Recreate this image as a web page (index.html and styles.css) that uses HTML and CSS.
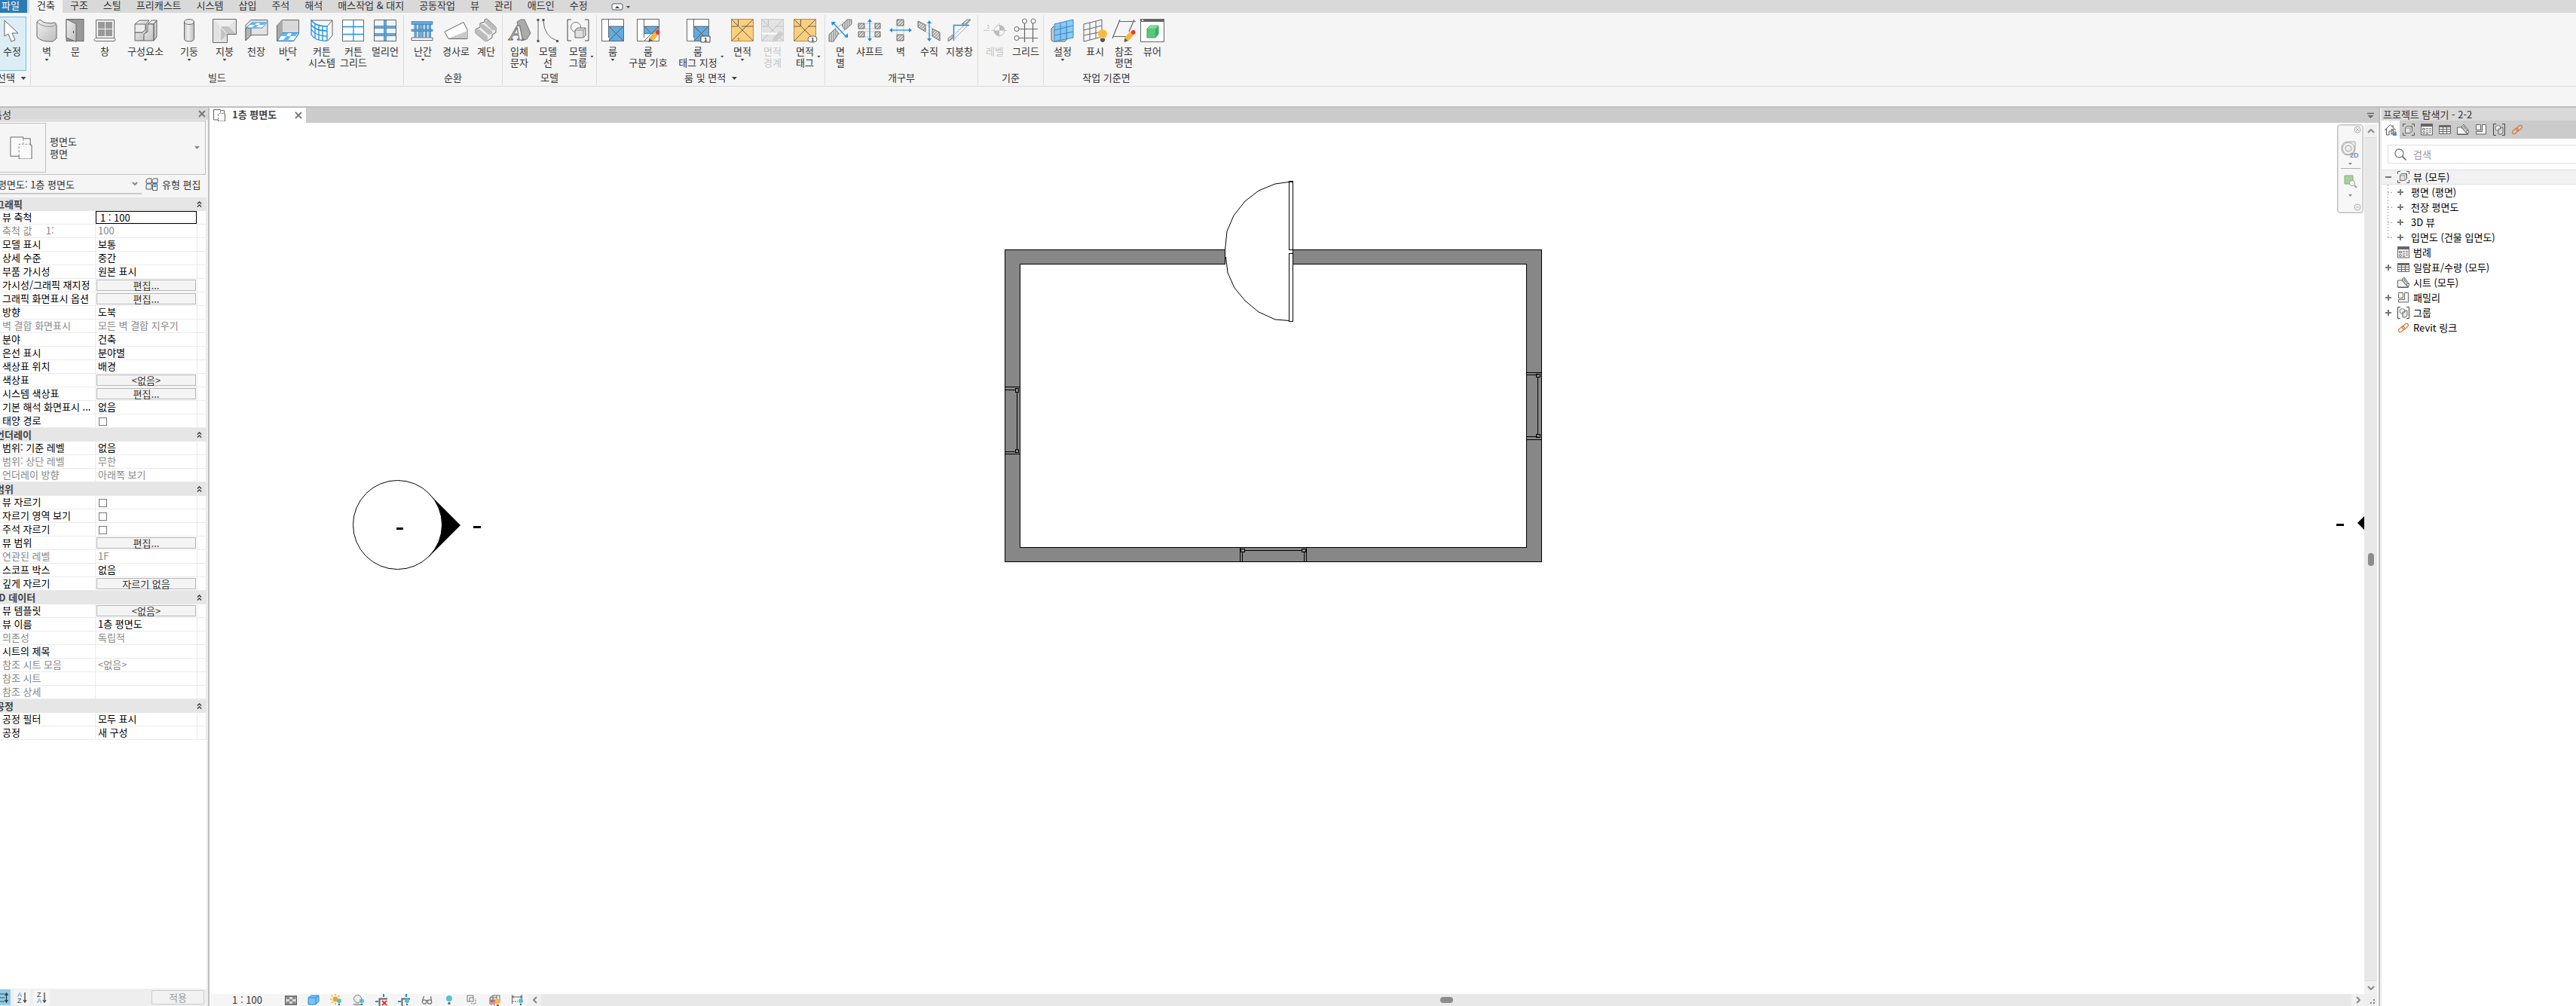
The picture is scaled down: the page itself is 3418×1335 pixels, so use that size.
FILE: index.html
```html
<!DOCTYPE html>
<html lang="ko">
<head>
<meta charset="utf-8">
<title>1층 평면도</title>
<link rel="stylesheet" href="styles.css">
</head>
<body>
<svg class="sprite" aria-hidden="true">
  <defs>
    <linearGradient id="metal" x1="0" y1="0" x2="1" y2="1"><stop offset="0" stop-color="#f2f2f2"/><stop offset="1" stop-color="#bdbdbd"/></linearGradient>
    <linearGradient id="tube" x1="0" y1="0" x2="1" y2="0"><stop offset="0" stop-color="#c4c4c4"/><stop offset=".4" stop-color="#efefef"/><stop offset="1" stop-color="#bbb"/></linearGradient>
    <pattern id="hatch" width="4" height="4" patternUnits="userSpaceOnUse"><rect width="4" height="4" fill="#d6d6d6"/><path d="M-1 5L5-1M-1 1L1-1M3 5L5 3" stroke="#777" stroke-width=".9"/></pattern>
    <pattern id="vhatch" width="3" height="3" patternUnits="userSpaceOnUse"><rect width="3" height="3" fill="#d6d6d6"/><path d="M1 0V3" stroke="#777" stroke-width=".9"/></pattern>
  </defs>
  <symbol id="plan" viewBox="0 0 16 16"><path d="M.5 .5h9v1h5v4.500h1v10H6.500V14h-6z" fill="#fafafa" stroke="#666" vector-effect="non-scaling-stroke"/><path d="M9.500 1.500v4H15M6.500 14V5.500h3" fill="none" stroke="#888" stroke-dasharray="3 2" vector-effect="non-scaling-stroke"/></symbol>
  <symbol id="views" viewBox="0 0 16 16"><path d="M4 .5H.5V4M12 .5h3.500V4M.5 12v3.500H4M15.500 12v3.500H12" fill="none" stroke="#555"/><path d="M3.500 6l2-2.500h7v6.500l-2.500 2.500H3.500z" fill="#e4e4e4" stroke="#666"/><path d="M3.500 6H10v6.500M10 6l2.500-2.500" fill="none" stroke="#999"/></symbol>
  <symbol id="legend" viewBox="0 0 16 16"><path d="M.5 1h15v14H.5z" fill="#f4f4f4" stroke="#666"/><path d="M0 0h16v4H0z" fill="#666"/><path d="M2.500 6.500h3v2h-3z" fill="none" stroke="#777"/><circle cx="4" cy="12" r="1.500" fill="none" stroke="#777"/><path d="M7 6.500h7M7 9h7M7 11.500h7M7 13.500h4" stroke="#777" stroke-dasharray="3 1"/></symbol>
  <symbol id="sched" viewBox="0 0 16 16"><path d="M.5 3h15v10.500H.5z" fill="#f4f4f4" stroke="#666"/><path d="M0 2h16v3H0z" fill="#666"/><path d="M0 7.500h16M0 10.500h16M5.500 4v10M10.500 4v10" stroke="#666"/></symbol>
  <symbol id="sheet" viewBox="0 0 16 16"><path d="M.5 14V5h5l2 2 7.500 7z" fill="#f4f4f4" stroke="#666"/><path d="M6 4l3-3 6.500 8.500-3 3z" fill="#e4e4e4" stroke="#666"/><path d="M7.500 2.500l3.500 5M9 3l4 6" stroke="#888" fill="none"/><circle cx="14" cy="11" r="1.800" fill="#eee" stroke="#666"/><path d="M.5 14.500h14" stroke="#555"/></symbol>
  <symbol id="family" viewBox="0 0 16 16"><path d="M1.500 1.500h6v7h-6zM9.500 1.500h5v12.500h-13v-3.500h8z" fill="#f4f4f4" stroke="#666"/></symbol>
  <symbol id="group" viewBox="0 0 16 16"><path d="M4 .5H.5v15H4M12 .5h3.500v15H12" fill="none" stroke="#444"/><circle cx="6.500" cy="6" r="3.500" fill="#eee" stroke="#777"/><path d="M7 7h3V5h3v7l-2 2H7z" fill="#ddd" fill-opacity=".7" stroke="#666"/></symbol>
  <symbol id="link" viewBox="0 0 16 16"><g fill="none" stroke="#e07b39" stroke-width="1.300"><rect x="-4.500" y="-2.300" width="9" height="4.600" rx="2.300" transform="translate(5.500 10) rotate(-42)"/><rect x="-4.500" y="-2.300" width="9" height="4.600" rx="2.300" transform="translate(10.500 6) rotate(-42)"/></g></symbol>
  <symbol id="close" viewBox="0 0 10 10"><path d="M1 1l8 8M9 1L1 9" stroke="#777" stroke-width="1.800"/></symbol>
  <symbol id="collapse" viewBox="0 0 8 10"><path d="M1 4.500l3-3 3 3M1 9l3-3 3 3" fill="none" stroke="#333" stroke-width="1.500"/></symbol>
  <symbol id="bulb" viewBox="0 0 8 13"><circle cx="4" cy="4" r="4" fill="#56c2cc"/><path d="M2.500 9h3v3h-3z" fill="#666"/></symbol>
  <symbol id="pencil" viewBox="0 0 16 17"><path d="M0 17l1-6 5 4z" fill="#5c5c5c"/><path d="M1 11l8-9 5 4-8 9z" fill="#fcb73e" stroke="#d99a2b" stroke-width=".5"/><circle cx="13" cy="3" r="3" fill="#f2323c"/></symbol>
</svg>

<nav class="tabs" aria-label="리본 탭">
  <button class="tab file">파일</button><button class="tab active">건축</button><button class="tab">구조</button><button class="tab">스틸</button><button class="tab">프리캐스트</button><button class="tab">시스템</button><button class="tab">삽입</button><button class="tab">주석</button><button class="tab">해석</button><button class="tab">매스작업 &amp; 대지</button><button class="tab">공동작업</button><button class="tab">뷰</button><button class="tab">관리</button><button class="tab">애드인</button><button class="tab">수정</button>
  <button class="minimize" aria-label="리본 최소화"><svg width="26" height="12" viewBox="0 0 26 12"><rect x="1" y="2" width="14" height="8" rx="2" fill="#fff" stroke="#4a5560"/><path d="M5 8l3-3 3 3z" fill="#333"/><path d="M20 5h5l-2.500 3z" fill="#444"/></svg></button>
</nav>

<div class="ribbon">
  <section class="panel select-panel">
    <div class="tools"><button class="tool modify"><svg viewBox="0 0 32 32"><path d="M6 3v21l5-3 4 10 5-2-4-9h8z" fill="#fff" stroke="#666"/></svg><span class="label">수정</span></button></div>
    <h2>선택 <i class="tri"></i></h2>
  </section>
  <section class="panel">
    <div class="tools">
      <button class="tool w38"><svg viewBox="0 0 32 32"><path d="M3 5l4-3Q14 9 27 6l2 3v18l-5 4Q9 32 3 25z" fill="url(#metal)" stroke="#666"/><path d="M3 5Q11 13 24 11l5-3M24 11" fill="none" stroke="#888"/></svg><span class="label">벽</span><i class="tri"></i></button>
      <button class="tool w38"><svg viewBox="0 0 32 32"><path d="M4 1.500h23v29H4z" fill="#999" stroke="#666"/><path d="M4 1.500l13 6v24L4 26z" fill="url(#metal)" stroke="#666"/><path d="M13.500 17v3" stroke="#444"/></svg><span class="label">문</span></button>
      <button class="tool w40"><svg viewBox="0 0 32 32"><path d="M4.500 2.500h24v24h-24z" fill="#f5f5f5" stroke="#666"/><path d="M7 5h9v9H7zM17 5h9v9h-9zM7 15h9v9H7zM17 15h9v9h-9z" fill="#999"/><path d="M4 26.500h25l1 2q0 2-2 2H4q-2 0-2-2z" fill="#fff" stroke="#666"/></svg><span class="label">창</span></button>
      <button class="tool w68"><svg viewBox="0 0 32 32"><path d="M2 8l6-5h13l-4 5v13l-3 3v6H2V19h10l4-5" fill="url(#metal)" stroke="#666"/><path d="M2 8v11h10l4-4V8zM19 8l5-5h7l-4 5z" fill="#ededed" stroke="#666"/><path d="M19 8h8v22H14v-9l5-3zM27 8l4-5v22l-4 5z" fill="url(#metal)" stroke="#666"/></svg><span class="label">구성요소</span><i class="tri"></i></button>
      <button class="tool w48"><svg viewBox="0 0 32 32"><path d="M9.500 5v22q0 4 6.500 4t6.500-4V5" fill="url(#tube)" stroke="#666"/><ellipse cx="16" cy="5" rx="6.500" ry="3.500" fill="#e8e8e8" stroke="#666"/></svg><span class="label">기둥</span><i class="tri"></i></button>
      <button class="tool w46"><svg viewBox="0 0 32 32"><path d="M.5 1.500h31v20h-12v11H.500z" fill="#e2e2e2" stroke="#666"/><path d="M1 2l9 9v20l9-9v-1l12 0-10-10H10z" fill="#c4c4c4"/><path d="M1 2l9 9h11l10-9z" fill="#efefef"/><path d="M10 11l9 10M10 11v20" stroke="#fff"/></svg><span class="label">지붕</span><i class="tri"></i></button>
      <button class="tool w38"><svg viewBox="0 0 32 32"><path d="M2 9l7-6.500h22v20H9L2 30z" fill="#e2e2e2" stroke="#666"/><path d="M2 13v17l7-7V13z" fill="#b5b5b5" stroke="#666"/><path d="M3 13l7-7h20l-6 7z" fill="#fff" stroke="#1a8fe8"/><path d="M10 6h7l-3 3H7zM22 6h7l-3 3h-7zM14 9h5l-4 4h-5z" fill="#62b5f0"/></svg><span class="label">천장</span></button>
      <button class="tool w46"><svg viewBox="0 0 32 32"><path d="M1.500 10l7-7.500h22v18l-7 10h-22z" fill="#d8d8d8" stroke="#666"/><path d="M2 10l7-7v18l-7 9z" fill="#aaa"/><path d="M2 30l7-10.500h21.500L24 30z" fill="#fff" stroke="#1a8fe8"/><path d="M9 20h7l-2 4H7zM21 20h8l-3 4h-7zM14 24h6l-4 5H10z" fill="#62b5f0"/></svg><span class="label">바닥</span><i class="tri"></i></button>
      <button class="tool w44"><svg viewBox="0 0 32 32"><path d="M2 3h28v20l-6 7M30 3l-7 8" fill="none" stroke="#666"/><path d="M2 3q6 8 21 8v19Q8 31 2 22zM2 9q6 8 21 8M2 15q6 9 21 9M7 7v20M12 10v19M17 11v19" fill="none" stroke="#1a8fe8" stroke-width="1.300"/></svg><span class="label">커튼<br>시스템</span></button>
      <button class="tool w40"><svg viewBox="0 0 32 32"><path d="M1.500 2.500h28v28h-28z" fill="#fff" stroke="#666"/><path d="M16 2v29M1 11.500h29M1 21.500h29" stroke="#1a8fe8" stroke-width="1.300"/></svg><span class="label">커튼<br>그리드</span></button>
      <button class="tool w44"><svg viewBox="0 0 32 32"><path d="M1.500 2.500h29v28h-29z" fill="#f5f5f5" stroke="#666"/><path d="M2 10.500h28v3H2zM2 20.500h28v3H2zM14.500 3h3v27h-3z" fill="#62abe0" stroke="#4b87b3" stroke-width=".8"/></svg><span class="label">멀리언</span></button>
    </div>
    <h2>빌드</h2>
  </section>
  <section class="panel">
    <div class="tools">
      <button class="tool w46"><svg viewBox="0 0 32 32"><path d="M1 4.500h28v4H1zM1 15h28v2.500H1zM5 8h2.500v17H5zM10 8h2.500v17H10zM14 8h2.500v17H14zM19 8h2.500v17H19zM24 8h2.500v17H24z" fill="#62abe0" stroke="#4b87b3" stroke-width=".8"/><path d="M1 26h28v3.500H1z" fill="#fff" stroke="#666"/></svg><span class="label">난간</span><i class="tri"></i></button>
      <button class="tool w42"><svg viewBox="0 0 32 32"><path d="M1 18L26 5.500l5 10V27.500H6z" fill="#fff" stroke="#666"/><path d="M6 27l25-10v10z" fill="#c9c9c9"/></svg><span class="label">경사로</span></button>
      <button class="tool w38"><svg viewBox="0 0 32 32"><path d="M2 15l6-3V7l6-2V2l3-1 12 11v7l-5 3v4l-6 4h-4L2 20z" fill="#eee" stroke="#666"/><path d="M2 15l5 0 11 9v6h-4L2 20zM8 8h4l12 9v4l-5 1L8 12zM14 3h4l11 9v4l-5 0L14 6z" fill="#bdbdbd"/></svg><span class="label">계단</span></button>
    </div>
    <h2>순환</h2>
  </section>
  <section class="panel">
    <div class="tools">
      <button class="tool w40"><svg viewBox="0 0 32 32"><path d="M13 5l5-3h5l8 18-5 8-7 2z" fill="#aaa" stroke="#777"/><text x="3" y="29" font-size="30" font-weight="700" font-style="italic" font-family="Liberation Serif, serif" fill="#f2f2f2" stroke="#666">A</text></svg><span class="label">입체<br>문자</span></button>
      <button class="tool w36"><svg viewBox="0 0 32 32"><path d="M3 4v25M10 4q1 20 18 26" fill="none" stroke="#666"/><path d="M1.500 1h3v3h-3zM1.500 29h3v3h-3zM8.500 1h3v3h-3zM27 29h3v3h-3z" fill="#555"/></svg><span class="label">모델<br>선</span></button>
      <button class="tool w44 split"><svg viewBox="0 0 32 32"><path d="M7 2H2v28h5M25 2h5v28h-5" fill="none" stroke="#444"/><circle cx="13" cy="12" r="6.500" fill="none" stroke="#777"/><path d="M12 16l3-3h11v10l-3 3H12z" fill="#e0e0e0" stroke="#666"/><path d="M12 16h11v10M23 16l3-3" fill="none" stroke="#888"/></svg><span class="row"><span class="label">모델<br>그룹</span><i class="tri"></i></span></button>
    </div>
    <h2>모델</h2>
  </section>
  <section class="panel">
    <div class="tools">
      <button class="tool w38"><svg viewBox="0 0 32 32"><path d="M1.500 1.500h29v29h-29z" fill="#fff" stroke="#666"/><path d="M11 11h19v19H11z" fill="#62abe0"/><path d="M10.500 2v24M10.500 11h20M11 11l19 19M30 11L11 30" stroke="#555" stroke-width=".9"/></svg><span class="label">룸</span><i class="tri"></i></button>
      <button class="tool w56"><svg viewBox="0 0 32 32"><path d="M1.500 1.500h29v29h-29z" fill="#fff" stroke="#666"/><path d="M11 11h19v10H11z" fill="#62abe0"/><path d="M10.500 2v24M10.500 11h20M11 30l19-19M11 11l8 8" stroke="#555" stroke-width=".9"/><path d="M10 20.500h14" stroke="#1a8fe8" stroke-width="1.500"/><use href="#pencil" x="16" y="16" width="16" height="16"/></svg><span class="label">룸<br>구분 기호</span></button>
      <button class="tool w76 split"><svg viewBox="0 0 32 32"><path d="M1.500 1.500h29v29h-29z" fill="#fff" stroke="#666"/><path d="M11 11h19v19H11z" fill="#62abe0"/><path d="M10.500 2v24M10.500 11h20M11 11l19 19M30 11L11 30" stroke="#555" stroke-width=".9"/><path d="M20 24h12v8H20z" fill="#fff" stroke="#444"/><text x="24" y="31" font-size="8" font-weight="700" font-family="Liberation Sans, sans-serif" fill="#333">1</text></svg><span class="row"><span class="label">룸<br>태그 지정</span><i class="tri"></i></span></button>
      <button class="tool w42"><svg viewBox="0 0 32 32"><path d="M1.500 1.500h29v29h-29z" fill="#fece7c" stroke="#b08c4c"/><path d="M2 11h8M20 11h10.500M10.500 2v8M11 26v4M2 2l28 28M30 2L2 30M15 11h6" stroke="#555" stroke-width=".9"/></svg><span class="label">면적</span><i class="tri"></i></button>
      <button class="tool w38 off" disabled><svg viewBox="0 0 32 32"><path d="M1.500 1.500h29v29h-29z" fill="#e3e3e3" stroke="#ccc"/><path d="M2 11h8M20 11h10.500M10.500 2v8M2 2l28 28M30 2L2 30" stroke="#bbb" stroke-width=".9"/><path d="M2 20.500h20" stroke="#fff" stroke-width="2"/><path d="M16 32l1-6 9-9 5 4-9 9z" fill="#ccc"/></svg><span class="label">면적<br>경계</span></button>
      <button class="tool w48 split"><svg viewBox="0 0 32 32"><path d="M1.500 1.500h29v29h-29z" fill="#fece7c" stroke="#b08c4c"/><path d="M2 11h8M20 11h10.500M10.500 2v8M2 2l28 28M30 2L2 30" stroke="#555" stroke-width=".9"/><rect x="20" y="24" width="12" height="8" rx="4" fill="#fff" stroke="#666"/><text x="24" y="31" font-size="8" font-weight="700" font-family="Liberation Sans, sans-serif" fill="#333">1</text></svg><span class="row"><span class="label">면적<br>태그</span><i class="tri"></i></span></button>
    </div>
    <h2>룸 및 면적 <i class="tri"></i></h2>
  </section>
  <section class="panel">
    <div class="tools">
      <button class="tool w36"><svg viewBox="0 0 32 32"><path d="M1 31V22l8-8 5 6-7 11zM18 9l7-7h6v6L22 16z" fill="url(#vhatch)" stroke="#777"/><path d="M9 14l9-6M14 22l9-7" stroke="#bbb"/><path d="M7 7l17 18" stroke="#1a8fe8" stroke-width="1.300"/><path d="M4 5h6l-5 5zM26 26v-6l-5 5z" fill="#1a8fe8"/></svg><span class="label">면<br>별</span></button>
      <button class="tool w42"><svg viewBox="0 0 32 32"><path d="M1 7h8v7H1zM23 7h7v7h-7zM1 18h8v7H1zM23 18h7v7h-7z" fill="url(#hatch)" stroke="#666"/><path d="M9 7h14M9 14h14M9 18h14M9 25h14" stroke="#ccc"/><path d="M16 3v26" stroke="#1a8fe8" stroke-width="1.300"/><path d="M13 5h6l-3-4zM13 27h6l-3 4z" fill="#1a8fe8"/></svg><span class="label">샤프트</span></button>
      <button class="tool w40"><svg viewBox="0 0 32 32"><path d="M11 2h9v8h-9zM11 22h9v8h-9z" fill="url(#hatch)" stroke="#666"/><path d="M11 10v12M20 10v12" stroke="#ccc"/><path d="M3 16h26" stroke="#1a8fe8" stroke-width="1.300"/><path d="M5 13v6l-4-3zM27 13v6l4-3z" fill="#1a8fe8"/></svg><span class="label">벽</span></button>
      <button class="tool w36"><svg viewBox="0 0 32 32"><path d="M1 4l10 5v9L1 12zM20 14l10 5v11l-10-6z" fill="url(#hatch)" stroke="#666"/><path d="M11 8l9 5M11 18l9 6" stroke="#ccc"/><path d="M16 5v24" stroke="#1a8fe8" stroke-width="1.300"/><path d="M13 7h6l-3-4zM13 27h6l-3 4z" fill="#1a8fe8"/></svg><span class="label">수직</span></button>
      <button class="tool w44"><svg viewBox="0 0 32 32"><path d="M1 31v-4l6-5v5zM19 8l7-6h5l-5 6z" fill="url(#hatch)" stroke="#888"/><path d="M10 21l13-12M10 27L28 9" stroke="#aaa"/><path d="M8.500 30V9.500H29" fill="none" stroke="#1a8fe8" stroke-width="1.500"/></svg><span class="label">지붕창</span></button>
    </div>
    <h2>개구부</h2>
  </section>
  <section class="panel">
    <div class="tools">
      <button class="tool w40 off" disabled><svg viewBox="0 0 32 32"><path d="M1 16.500h9M11 16.500h21M22 7v19" stroke="#c4c4c4" stroke-dasharray="8 1"/><circle cx="22" cy="16.500" r="7" fill="#f5f5f5" stroke="#bbb"/><path d="M22 16.500v-7a7 7 0 0 1 7 7zM22 16.500v7a7 7 0 0 1-7-7z" fill="#bbb"/><text x="5" y="14" font-size="8" font-family="Liberation Sans, sans-serif" fill="#bbb">1</text></svg><span class="label">레벨</span></button>
      <button class="tool w42"><svg viewBox="0 0 32 32"><path d="M14.500 7v25M25.500 7v25M7 14.500h25M7 26.500h25" stroke="#666" stroke-width="1.200"/><g fill="#fff" stroke="#666"><circle cx="14.500" cy="4" r="3"/><circle cx="26" cy="4" r="3"/><circle cx="4" cy="14.500" r="3"/><circle cx="4" cy="26.500" r="3"/></g></svg><span class="label">그리드</span></button>
    </div>
    <h2>기준</h2>
  </section>
  <section class="panel last">
    <div class="tools">
      <button class="tool w46"><svg viewBox="0 0 32 32"><path d="M1 14l3-3h18v17l-3 3H3l-2-2z" fill="#c9c9c9" stroke="#666"/><path d="M5 8l25-6v24L5 31z" fill="#86bfe8" fill-opacity=".85" stroke="#1a8fe8"/><path d="M5 16l25-6M5 23l25-5M13 6v23M21 4v23" stroke="#1a8fe8"/></svg><span class="label">설정</span><i class="tri"></i></button>
      <button class="tool w40"><svg viewBox="0 0 32 32"><path d="M1 8l24-6v23L1 31zM1 16l24-6M1 23l24-5M9 6v23M17 4v23" fill="none" stroke="#666"/><path d="M23 27h6v3l-2 2h-2l-2-2z" fill="#555"/><circle cx="26" cy="21" r="6" fill="#fdb93f"/></svg><span class="label">표시</span></button>
      <button class="tool w36"><svg viewBox="0 0 32 32"><path d="M10 4.500h22M2 24.500h18M11 2L1 27M30 2l-7 16" fill="none" stroke="#666" stroke-width="1.200"/><use href="#pencil" x="16" y="16" width="16" height="16"/></svg><span class="label">참조<br>평면</span></button>
      <button class="tool w40"><svg viewBox="0 0 32 32"><path d="M.5 1.500h31v30H.5z" fill="#fff" stroke="#666"/><path d="M0 1h32v4H0z" fill="#666"/><path d="M2 2h2v2H2z" fill="#fff"/><path d="M9 14l4-4h11v11l-4 5H9z" fill="#57c87c" stroke="#3ea25f"/><path d="M20 14l4-4v11l-4 5z" fill="#3cac62"/><path d="M9 14l4-4h11l-4 4z" fill="#7ddb9a"/></svg><span class="label">뷰어</span></button>
    </div>
    <h2>작업 기준면</h2>
  </section>
</div>
<div class="options"></div>

<div class="workspace">
  <aside class="props">
    <header class="dock-title"><span>특성</span><button class="x" aria-label="닫기"><svg width="10" height="10"><use href="#close"/></svg></button></header>
    <button class="type"><span class="thumb"><svg width="30" height="30"><use href="#plan"/></svg></span><span class="type-name">평면도<br>평면</span><i class="tri grey"></i></button>
    <div class="instance">
      <label class="pick"><select aria-label="보기"><option>평면도: 1층 평면도</option></select><svg width="8" height="6" viewBox="0 0 8 6"><path d="M1 1l3 3 3-3" fill="none" stroke="#888" stroke-width="2"/></svg></label>
      <button class="edit-type"><svg width="17" height="17" viewBox="0 0 17 17"><path d="M1 3l2-2h5v6H1zM9 3l2-2h5v6H9zM1 10l1-2h6v7H1z" fill="#f4f4f4" stroke="#555"/><path d="M9.500 8.500h6v8h-6z" fill="#fff" stroke="#555"/><path d="M10 6h5v3h-5zM10.500 10h4v2h-4z" fill="#3a7fc4"/></svg>유형 편집</button>
    </div>
    <div class="grid">
    <table>
      <colgroup><col class="c1"><col class="c2"><col class="c3"></colgroup>
      <tbody>
      <tr class="sec"><th colspan="3"><span>그래픽</span><svg width="7" height="10"><use href="#collapse"/></svg></th></tr>
      <tr><td>뷰 축척</td><td><input class="scale" value="1 : 100" aria-label="뷰 축척"></td><td></td></tr>
      <tr class="dim"><td>축척 값 &nbsp; &nbsp; 1:</td><td>100</td><td></td></tr>
      <tr><td>모델 표시</td><td>보통</td><td></td></tr>
      <tr><td>상세 수준</td><td>중간</td><td></td></tr>
      <tr><td>부품 가시성</td><td>원본 표시</td><td></td></tr>
      <tr><td>가시성/그래픽 재지정</td><td><button class="cell">편집...</button></td><td></td></tr>
      <tr><td>그래픽 화면표시 옵션</td><td><button class="cell">편집...</button></td><td></td></tr>
      <tr><td>방향</td><td>도북</td><td></td></tr>
      <tr class="dim"><td>벽 결합 화면표시</td><td>모든 벽 결합 지우기</td><td></td></tr>
      <tr><td>분야</td><td>건축</td><td></td></tr>
      <tr><td>은선 표시</td><td>분야별</td><td></td></tr>
      <tr><td>색상표 위치</td><td>배경</td><td></td></tr>
      <tr><td>색상표</td><td><button class="cell">&lt;없음&gt;</button></td><td></td></tr>
      <tr><td>시스템 색상표</td><td><button class="cell">편집...</button></td><td></td></tr>
      <tr><td>기본 해석 화면표시 ...</td><td>없음</td><td></td></tr>
      <tr><td><label for="sun">태양 경로</label></td><td><input type="checkbox" id="sun"></td><td></td></tr>
      <tr class="sec"><th colspan="3"><span>언더레이</span><svg width="7" height="10"><use href="#collapse"/></svg></th></tr>
      <tr><td>범위: 기준 레벨</td><td>없음</td><td></td></tr>
      <tr class="dim"><td>범위: 상단 레벨</td><td>무한</td><td></td></tr>
      <tr class="dim"><td>언더레이 방향</td><td>아래쪽 보기</td><td></td></tr>
      <tr class="sec"><th colspan="3"><span>범위</span><svg width="7" height="10"><use href="#collapse"/></svg></th></tr>
      <tr><td><label for="crop">뷰 자르기</label></td><td><input type="checkbox" id="crop"></td><td></td></tr>
      <tr><td><label for="cropvis">자르기 영역 보기</label></td><td><input type="checkbox" id="cropvis"></td><td></td></tr>
      <tr><td><label for="anno">주석 자르기</label></td><td><input type="checkbox" id="anno"></td><td></td></tr>
      <tr><td>뷰 범위</td><td><button class="cell">편집...</button></td><td></td></tr>
      <tr class="dim"><td>연관된 레벨</td><td>1F</td><td></td></tr>
      <tr><td>스코프 박스</td><td>없음</td><td></td></tr>
      <tr><td>깊게 자르기</td><td><button class="cell">자르기 없음</button></td><td></td></tr>
      <tr class="sec"><th colspan="3"><span>ID 데이터</span><svg width="7" height="10"><use href="#collapse"/></svg></th></tr>
      <tr><td>뷰 템플릿</td><td><button class="cell">&lt;없음&gt;</button></td><td></td></tr>
      <tr><td>뷰 이름</td><td>1층 평면도</td><td></td></tr>
      <tr class="dim"><td>의존성</td><td>독립적</td><td></td></tr>
      <tr><td>시트의 제목</td><td></td><td></td></tr>
      <tr class="dim"><td>참조 시트 모음</td><td>&lt;없음&gt;</td><td></td></tr>
      <tr class="dim"><td>참조 시트</td><td></td><td></td></tr>
      <tr class="dim"><td>참조 상세</td><td></td><td></td></tr>
      <tr class="sec"><th colspan="3"><span>공정</span><svg width="7" height="10"><use href="#collapse"/></svg></th></tr>
      <tr><td>공정 필터</td><td>모두 표시</td><td></td></tr>
      <tr><td>공정</td><td>새 구성</td><td></td></tr>
      </tbody>
    </table>
    </div>
    <footer class="props-foot">
      <button class="sort on" aria-label="그룹별 정렬"><svg width="14" height="16" viewBox="0 0 14 16"><path d="M0 3h6M0 8h6M0 13h6" stroke="#444"/><path d="M8.500 3v10M6.500 5l2-3 2 3M6.500 11l2 3 2-3" fill="none" stroke="#333" stroke-width="1.300"/></svg></button>
      <button class="sort" aria-label="오름차순"><svg width="14" height="18" viewBox="0 0 14 18"><g font-family="Liberation Sans, sans-serif" font-size="9"><text x="1" y="8" fill="#1a8fe8">A</text><text x="1" y="16" fill="#444">Z</text></g><path d="M11 2v12M9 12l2 3 2-3" fill="none" stroke="#444" stroke-width="1.300"/></svg></button>
      <button class="sort" aria-label="내림차순"><svg width="14" height="18" viewBox="0 0 14 18"><g font-family="Liberation Sans, sans-serif" font-size="9"><text x="1" y="8" fill="#444">Z</text><text x="1" y="16" fill="#1a8fe8">A</text></g><path d="M11 2v12M9 12l2 3 2-3" fill="none" stroke="#444" stroke-width="1.300"/></svg></button>
      <button class="apply" disabled>적용</button>
    </footer>
  </aside>

  <main class="view">
    <div class="doc-tabs">
      <div class="doc"><svg width="16" height="16"><use href="#plan"/></svg><b>1층 평면도</b><button class="x" aria-label="닫기"><svg width="10" height="10"><use href="#close"/></svg></button></div>
      <button class="more" aria-label="열린 뷰"><svg width="9" height="9" viewBox="0 0 9 9"><path d="M0 1.500h9" stroke="#666" stroke-width="1.500"/><path d="M.5 4h8L4.500 8z" fill="#666"/></svg></button>
    </div>
    <div class="stage">
      <div class="canvas">
        <svg class="drawing" viewBox="278 163 2859 1156" preserveAspectRatio="xMidYMin meet">
          <g stroke="#000" fill="none" shape-rendering="crispEdges">
            <path d="M1625.500 331.500H1333.500V745.500H2045.500V331.500H1715.500V350.500H2025.500V726.500H1353.500V350.500H1625.500z" fill="#878787"/>
            <path d="M1710.500 241.500h5v-1h-5zM1710.500 240.500h5v91h-5zM1710.500 336.500h5v90h-5z"/>
            <path d="M1333.500 513.500h20M1333.500 517.500h14M1333.500 599.500h14M1333.500 602.500h20M1349.500 520V597M1347.500 515.500h4v5h-4zM1347.500 596.500h4v4h-4z"/>
            <path d="M2025.500 494.500h20M2025.500 497.500h14M2025.500 579.500h14M2025.500 583.500h20M2040.500 500V577M2038.500 496.500h5v4h-5zM2038.500 576.500h5v4h-5z"/>
            <path d="M1645.500 726v19M1648.500 732v13M1730.500 732v13M1733.500 726v19M1652 730.500h76M1646.500 728.500h5v4h-5zM1727.500 728.500h5v4h-5z"/>
          </g>
          <path d="M1710.500 241.500L1692 244 1670 253 1652 267 1637 286 1628 307 1625.500 331.500V341M1626.500 341L1629 362 1638 382 1652 399 1670 414 1692 424 1710.500 425.500" fill="none" stroke="#000"/>
          <path d="M569 655L611 697 569 739z" fill="#000"/>
          <circle cx="527.500" cy="696.500" r="59" fill="#fff" stroke="#000"/>
          <path d="M526 700h9v3h-9zM628 698h10v3h-10zM3100 695h10v3h-10z" fill="#000"/>
          <path d="M3128 694l9-9v18z" fill="#000"/>
        </svg>
        <div class="navbar">
          <svg width="34" height="116" viewBox="0 0 34 116"><g fill="none" stroke="#aaa"><circle cx="26" cy="6" r="4"/><path d="M24 4l4 4M28 4l-4 4"/><circle cx="26" cy="109" r="4"/><path d="M24 109h4"/><path d="M5 30q0-8 9-8h9v8q0 10-9 10t-9-10z" fill="#eee"/><circle cx="14" cy="31" r="8"/><circle cx="14" cy="31" r="4"/><path d="M4 57.500h26"/></g><text x="16" y="43" font-size="9" font-weight="700" font-family="Liberation Sans, sans-serif" fill="#6a93bd">2D</text><path d="M14 50h5l-2.500 3zM14 92h5l-2.500 3z" fill="#888"/><path d="M9 67h11v11H9z" fill="#a8cf9c" stroke="#85b078"/><circle cx="19" cy="77" r="3.500" fill="#fff" stroke="#999"/><path d="M22 80l3 3" stroke="#999" stroke-width="2"/></svg>
        </div>
      </div>
      <div class="vscroll"><button aria-label="위로"><svg width="10" height="6" viewBox="0 0 10 6"><path d="M1 5l4-4 4 4" fill="none" stroke="#888" stroke-width="2"/></svg></button><div class="track"><span class="thumb-v"></span></div><button aria-label="아래로"><svg width="10" height="6" viewBox="0 0 10 6"><path d="M1 1l4 4 4-4" fill="none" stroke="#888" stroke-width="2"/></svg></button></div>
      <div class="status">
        <div class="controls">
          <button class="ratio">1 : 100</button>
          <button aria-label="상세 수준"><svg viewBox="0 0 16 16"><path d="M.5 3h15v11H.5z" fill="#ddd" stroke="#555" stroke-width="1.500"/><path d="M2 4h4v3H2zM10 4h4v3h-4zM6 7h4v3H6zM2 10h4v3H2zM10 10h4v3h-4z" fill="#888"/></svg></button>
          <button aria-label="비주얼 스타일"><svg viewBox="0 0 16 16"><path d="M1 5l4-3h10v8l-4 4H1z" fill="#7fc0f5" stroke="#1a8fe8"/><path d="M1 5h10v9M11 5l4-3" fill="none" stroke="#1a8fe8"/></svg></button>
          <button aria-label="태양 경로"><svg viewBox="0 0 16 16"><circle cx="7" cy="7" r="3.500" fill="#f6a313"/><path d="M7 0v2M7 12v2M0 7h2M2 2l1.500 1.500M12 2l-1.500 1.500M2 12l1.500-1.500" stroke="#f6a313" stroke-width="1.500"/><use href="#bulb" x="9" y="6" width="6" height="10"/></svg></button>
          <button aria-label="그림자"><svg viewBox="0 0 16 16"><ellipse cx="6" cy="14" rx="6" ry="1.500" fill="#aaa"/><circle cx="6.500" cy="6.500" r="5" fill="#eee" stroke="#777"/><use href="#bulb" x="9" y="6" width="6" height="10"/></svg></button>
          <button aria-label="뷰 자르기"><svg viewBox="0 0 16 16"><path d="M0 10h4M11 0v4" stroke="#1a8fe8" stroke-width="2"/><path d="M5.500 16V6.500H16" fill="none" stroke="#666" stroke-width="2"/><path d="M9 9l6 6M15 9l-6 6" stroke="#e33" stroke-width="2"/></svg></button>
          <button aria-label="자르기 영역"><svg viewBox="0 0 16 16"><path d="M0 10h4M11 0v4" stroke="#1a8fe8" stroke-width="2"/><path d="M5.500 16V6.500H16" fill="none" stroke="#666" stroke-width="2"/><use href="#bulb" x="9" y="6" width="6" height="10"/></svg></button>
          <button aria-label="임시 숨기기"><svg viewBox="0 0 16 16"><g fill="none" stroke="#777" stroke-width="1.300"><circle cx="5" cy="10.500" r="2.700"/><circle cx="12" cy="10.500" r="2.700"/><path d="M2.500 9l2-6M14.500 9l-1-6M7 9q1.500-1 3 0"/></g></svg></button>
          <button aria-label="숨은 요소"><svg viewBox="0 0 16 16"><use href="#bulb" x="4" y="2" width="8" height="13"/></svg></button>
          <button aria-label="임시 뷰 특성"><svg viewBox="0 0 16 16"><path d="M2 2h8v3M2 2v8h3M5 5h5v5H5z" fill="none" stroke="#777"/><path d="M7 13h6V6" fill="none" stroke="#777" stroke-dasharray="2 1"/></svg></button>
          <button aria-label="해석 모델"><svg viewBox="0 0 16 16"><path d="M2 5l4-3h9v9M2 5h9M2 5v9M6 2v12M11 2v5M2 8h12" fill="none" stroke="#666"/><path d="M2 10h8M4 8v7M8 8v7" stroke="#c33"/><circle cx="12" cy="10" r="3.500" fill="#fcb73e"/><path d="M11 14h3v2h-3z" fill="#666"/></svg></button>
          <button aria-label="구속조건"><svg viewBox="0 0 16 16"><path d="M1.500 1v12M14.500 1v6M2 4h12M4 2.500L2 4l2 1.500M12 2.500L14 4l-2 1.500" fill="none" stroke="#666"/><path d="M2 10h7" stroke="#666" stroke-dasharray="2 1"/><use href="#bulb" x="10" y="6" width="6" height="10"/></svg></button>
        </div>
        <button class="arrow" aria-label="왼쪽으로"><svg width="6" height="10" viewBox="0 0 6 10"><path d="M5 1L1 5l4 4" fill="none" stroke="#888" stroke-width="2"/></svg></button>
        <div class="htrack"><span class="thumb-h"></span></div>
        <button class="arrow" aria-label="오른쪽으로"><svg width="6" height="10" viewBox="0 0 6 10"><path d="M1 1l4 4-4 4" fill="none" stroke="#888" stroke-width="2"/></svg></button>
      </div>
      <svg class="grip" viewBox="0 0 17 16"><path d="M12 7h2v2h-2zM12 11h2v2h-2zM8 11h2v2H8z" fill="#888"/></svg>
    </div>
  </main>

  <aside class="browser">
    <header class="dock-title"><span>프로젝트 탐색기 - 2-2</span></header>
    <div class="btabs">
      <button class="on" aria-label="홈"><svg viewBox="0 0 16 16"><path d="M0 9l7.500-7.500L15 9M2.500 7v8H6v-5h2" fill="none" stroke="#555"/><path d="M11 2v3" stroke="#555"/><path d="M9 7.500h3v2H9zM11 11h4v2h-4zM9 10v4h2" fill="#fff" stroke="#555"/><path d="M11 13h5v3h-5z" fill="#3a8fd8"/></svg></button>
      <button aria-label="뷰"><svg><use href="#views"/></svg></button>
      <button aria-label="범례"><svg><use href="#legend"/></svg></button>
      <button aria-label="일람표"><svg><use href="#sched"/></svg></button>
      <button aria-label="시트"><svg><use href="#sheet"/></svg></button>
      <button aria-label="패밀리"><svg><use href="#family"/></svg></button>
      <button aria-label="그룹"><svg><use href="#group"/></svg></button>
      <button aria-label="링크"><svg><use href="#link"/></svg></button>
    </div>
    <label class="search"><svg width="16" height="16" viewBox="0 0 16 16"><circle cx="6.500" cy="6.500" r="5.500" fill="none" stroke="#777" stroke-width="1.300"/><path d="M10.500 10.500l5 5" stroke="#777" stroke-width="1.800"/></svg><input type="text" placeholder="검색" aria-label="검색"></label>
    <ul class="tree">
      <li class="node sel"><i class="tog minus"></i><svg><use href="#views"/></svg><span>뷰 (모두)</span></li>
      <li><ul class="kids">
        <li class="node"><i class="tog"></i><span>평면 (평면)</span></li>
        <li class="node"><i class="tog"></i><span>천장 평면도</span></li>
        <li class="node"><i class="tog"></i><span>3D 뷰</span></li>
        <li class="node"><i class="tog"></i><span>입면도 (건물 입면도)</span></li>
      </ul></li>
      <li class="node"><i class="tog none"></i><svg><use href="#legend"/></svg><span>범례</span></li>
      <li class="node"><i class="tog"></i><svg><use href="#sched"/></svg><span>일람표/수량 (모두)</span></li>
      <li class="node"><i class="tog none"></i><svg><use href="#sheet"/></svg><span>시트 (모두)</span></li>
      <li class="node"><i class="tog"></i><svg><use href="#family"/></svg><span>패밀리</span></li>
      <li class="node"><i class="tog"></i><svg><use href="#group"/></svg><span>그룹</span></li>
      <li class="node"><i class="tog none"></i><svg><use href="#link"/></svg><span>Revit 링크</span></li>
    </ul>
  </aside>
</div>
</body>
</html>
```
FILE: styles.css
```css
* { box-sizing: border-box; }
body {
  margin: 0;
  height: 100vh;
  display: flex;
  flex-direction: column;
  overflow: hidden;
  background: #f5f5f5;
  color: #333;
  font: 13px/15px "Noto Sans CJK KR", "Noto Sans", sans-serif;
}
button, input, select { font: inherit; color: inherit; margin: 0; padding: 0; border: 0; background: none; border-radius: 0; }
svg { display: block; flex: none; }
.sprite { position: absolute; width: 0; height: 0; }
ul { list-style: none; margin: 0; padding: 0; }
h2 { margin: 0; font-size: 13px; font-weight: 400; }

.tri { display: inline-block; width: 5px; height: 3px; background: #444; clip-path: polygon(0 0, 100% 0, 50% 100%); flex: none; }
.tri.grey { width: 7px; height: 4px; background: #888; }

/* ribbon tabs */
.tabs { flex: none; display: flex; height: 17px; background: #d9d9d9; }
.tab { padding: 0 10px 4px; height: 17px; line-height: 13px; white-space: nowrap; }
.tab.file { width: 36px; padding: 0 0 4px 2px; margin-right: 3px; text-align: left; background: #2a7ab5; color: #fff; }
.tab.active { background: #f5f5f5; }
.minimize { margin-left: 21px; }

/* ribbon panels */
.ribbon { flex: none; display: flex; height: 98px; padding-top: 3px; border-bottom: 1px solid #d9d9d9; }
.panel { display: flex; flex-direction: column; height: 93px; padding: 0 2px; border-right: 1px solid #dcdcdc; }
.panel.last { border-right: 0; }
.tools { display: flex; height: 75px; }
.tool { display: flex; flex-direction: column; align-items: center; padding-top: 4px; white-space: nowrap; }
.tool > svg { width: 32px; height: 32px; margin-bottom: 4px; overflow: visible; }
.tool .tri { margin-top: 3px; }
.tool.off { color: #c4c4c4; }
.label { line-height: 15px; text-align: center; }
.row { display: flex; align-items: center; gap: 4px; padding-left: 9px; }
.row .tri { margin-top: 0; }
.panel h2 { text-align: center; white-space: nowrap; line-height: 15px; }
.panel h2 .tri { width: 7px; height: 4px; margin: 0 0 2px 4px; }
.w36 { width: 36px; } .w38 { width: 38px; } .w40 { width: 40px; } .w42 { width: 42px; }
.w44 { width: 44px; } .w46 { width: 46px; } .w48 { width: 48px; } .w56 { width: 56px; }
.w68 { width: 68px; } .w76 { width: 76px; }
.select-panel { width: 41px; padding: 0; }
.select-panel .tools { padding-top: 2px; }
.select-panel h2 { text-align: left; text-indent: -4px; }
.tool.modify { width: 35px; height: 72px; padding: 1px 2px 0 0; background: #dcedf6; border: 1px solid #6fc0e4; border-left: 0; }
.options { flex: none; height: 28px; border-bottom: 2px solid #bfbfbf; }

/* docked areas */
.workspace { flex: 1; min-height: 0; display: flex; }
.dock-title { flex: none; display: flex; align-items: center; justify-content: space-between; height: 16px; background: #d9d9d9; white-space: nowrap; }
.x { line-height: 0; }

.props { flex: none; width: 278px; display: flex; flex-direction: column; background: #f5f5f5; border-right: 2px solid #bfbfbf; overflow: hidden; }
.props .dock-title { padding-right: 3px; }
.props .dock-title span { margin-left: -9px; }
.type { flex: none; display: flex; align-items: center; height: 72px; width: 273px; margin-top: 1px; padding-right: 7px; border: 1px solid #bfbfbf; border-left: 0; text-align: left; }
.thumb { display: flex; align-items: center; width: 61px; height: 66px; padding-left: 13px; border: 1px solid #bfbfbf; border-left: 0; }
.type-name { flex: 1; padding-left: 5px; line-height: 16px; }
.instance { flex: none; display: flex; align-items: flex-start; height: 30px; gap: 5px; }
.pick { display: flex; align-items: center; width: 188px; height: 26px; padding-right: 5px; border-bottom: 2px solid #ccc; }
.pick select { flex: 1; appearance: none; margin-left: -3px; }
.edit-type { display: flex; align-items: center; gap: 5px; height: 25px; }
.grid { flex: 1; min-height: 0; background: #fff; border-right: 2px solid #eee; }
table { width: 274px; table-layout: fixed; border-collapse: separate; border-spacing: 0; }
.c1 { width: 127px; } .c2 { width: 135px; } .c3 { width: 12px; }
td { height: 18px; padding: 0 0 0 3px; line-height: 16px; border-right: 1px solid #ebebeb; border-bottom: 1px solid #ebebeb; white-space: nowrap; overflow: hidden; color: #000; vertical-align: top; }
.dim td { color: #888; }
th { height: 18px; padding: 0 6px 0 0; background: #e6e6e6; line-height: 17px; text-align: left; vertical-align: top; font-weight: 700; color: #444; }
th span { display: inline-block; margin-left: -6px; }
th svg { float: right; margin-top: 4px; }
td:has(button) { padding: 1px 1px 0; }
td:has(.scale) { padding: 0; }
.cell { display: block; width: 100%; height: 15px; line-height: 13px; border: 1px solid #b5b5b5; background: #f4f4f4; color: #333; }
.scale { display: block; width: 100%; height: 17px; padding-left: 5px; line-height: 15px; border: 1px solid #000; background: #fff; }
input[type="checkbox"] { appearance: none; display: block; width: 11px; height: 11px; margin: 4px 0 0 1px; border: 1px solid #777; background: #fff; }
.props-foot { flex: none; display: flex; align-items: center; height: 23px; gap: 4px; padding-right: 5px; background: #eee; }
.sort { display: flex; align-items: center; justify-content: center; width: 22px; height: 21px; background: #f5f5f5; }
.sort.on { width: 14px; background: #8ecbea; }
.apply { width: 70px; height: 19px; margin-left: auto; border: 1px solid #ccc; border-radius: 2px; color: #999; background: #f2f2f2; line-height: 15px; }

/* drawing view */
.view { flex: 1; min-width: 0; display: flex; flex-direction: column; background: #fff; }
.doc-tabs { flex: none; display: flex; justify-content: space-between; height: 20px; background: #cbcbcb; }
.doc { display: flex; align-items: center; width: 128px; padding: 0 5px; background: #fff; }
.doc b { padding-left: 9px; flex: 1; font-weight: 700; color: #444; line-height: 18px; align-self: flex-start; }
.more { padding: 0 6px; }
.stage { flex: 1; min-height: 0; display: grid; grid-template: minmax(0, 1fr) 16px / minmax(0, 1fr) 17px; padding-right: 2px; }
.canvas { position: relative; min-height: 0; overflow: hidden; }
.drawing { width: 100%; height: 100%; }
.navbar { position: absolute; top: 2px; right: 1px; width: 35px; height: 118px; border: 1px solid #bfbfbf; border-radius: 4px; background: #f7f7f7; box-shadow: inset 0 0 0 1px #ddd; overflow: hidden; }
.vscroll { display: flex; flex-direction: column; margin-top: 2px; background: #e8e8e8; }
.vscroll button, .arrow { flex: none; display: flex; align-items: center; justify-content: center; width: 17px; height: 17px; background: #f0f0f0; }
.track { flex: 1; display: flex; justify-content: center; align-items: center; border: solid #ddd; border-width: 1px 0; }
.thumb-v { width: 8px; height: 17px; border-radius: 4px; background: #8c8c8c; }
.status { display: flex; height: 16px; padding-left: 2px; overflow: hidden; }
.arrow { height: 16px; }
.controls { display: flex; align-items: center; width: 421px; flex: none; background: #f5f5f5; }
.controls button { width: 30px; display: flex; justify-content: center; }
.controls svg { width: 16px; height: 16px; }
.controls .ratio { width: 91px; padding: 0 0 2px 5px; }
.htrack { flex: 1; display: flex; justify-content: center; align-items: center; background: #e8e8e8; }
.thumb-h { width: 17px; height: 8px; border-radius: 4px; background: #8c8c8c; }
.grip { width: 17px; height: 16px; background: #eee; }

/* project browser */
.browser { flex: none; width: 262px; display: flex; flex-direction: column; background: #fff; border-left: 2px solid #bfbfbf; box-shadow: inset 2px 0 #eee; padding-left: 2px; overflow: hidden; }
.browser .dock-title { height: 17px; padding: 0 0 1px 2px; }
.btabs { flex: none; display: flex; height: 24px; background: #cbcbcb; }
.btabs button { width: 24px; display: flex; align-items: center; justify-content: center; }
.btabs .on { background: #fff; }
.btabs svg, .node svg { width: 16px; height: 16px; }
.search { flex: none; display: flex; align-items: center; gap: 9px; height: 25px; margin: 8px 0 8px 8px; padding-left: 8px; border: 1px solid #ddd; border-right: 0; }
.search input { flex: 1; min-width: 0; outline: 0; }
.search input::placeholder { color: #999; opacity: 1; }
.node { display: flex; align-items: center; height: 20px; padding-left: 5px; color: #000; white-space: nowrap; }
.node span { padding-bottom: 1px; }
.node svg { margin: 0 5px 0 8px; }
.node.sel { background: #f2f2f2; border: solid #dedede; border-width: 1px 0; }
.tog { flex: none; width: 8px; height: 8px; background: linear-gradient(#777, #777) center / 8px 2px no-repeat, linear-gradient(#777, #777) center / 2px 8px no-repeat; }
.tog.minus { background: linear-gradient(#777, #777) center / 8px 2px no-repeat; }
.tog.none { background: none; }
.kids { margin-left: 8px; }
.kids .node { padding-left: 0; }
.kids .node::before { content: ""; width: 8px; height: 20px; margin-right: 5px; background: linear-gradient(90deg, #aaa 60%, transparent 0) 0 10px / 4px 1px repeat-x, linear-gradient(#aaa 60%, transparent 0) 0 0 / 1px 4px repeat-y; }
.kids .node:last-child::before { height: 11px; align-self: flex-start; }
.kids .tog { margin-right: 10px; }
```
